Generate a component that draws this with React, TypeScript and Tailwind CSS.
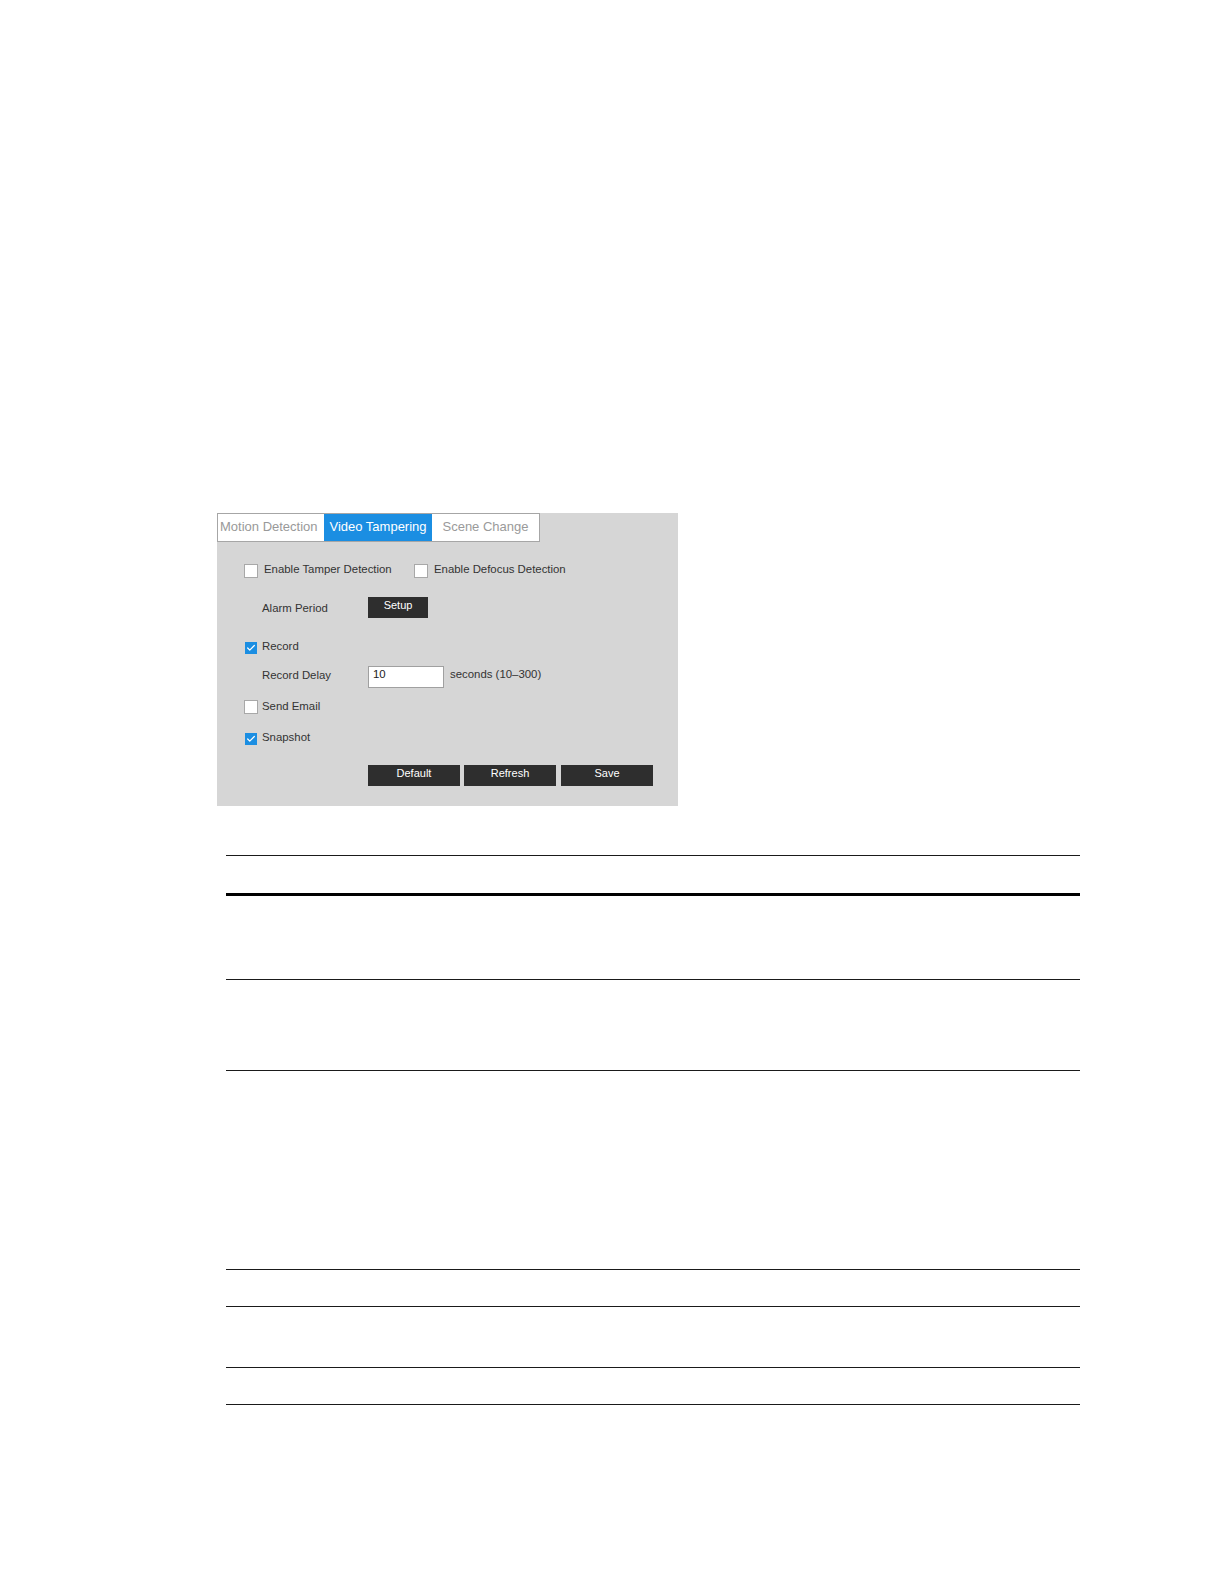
import { Check } from "lucide-react";

const FONT = { fontFamily: '"Liberation Sans", Arial, sans-serif' };

function Box({ checked }: { checked?: boolean }) {
  if (checked) {
    return (
      <span className="flex h-[12px] w-[12px] shrink-0 items-center justify-center bg-[#1b8ee2]">
        <Check className="size-[10px] text-white" strokeWidth={3} />
      </span>
    );
  }
  return <span className="block h-[14px] w-[14px] shrink-0 border border-[#a8a8a8] bg-white" />;
}

function DarkButton({ label, className }: { label: string; className: string }) {
  return (
    <button
      className={`flex h-[21px] items-start justify-center bg-[#2e2e2e] pt-[2px] text-[11px] leading-[13px] text-white ${className}`}
    >
      {label}
    </button>
  );
}

function TamperPanel() {
  return (
    <div className="ml-[217px] flex h-[293px] w-[461px] flex-col bg-[#d6d6d6] text-[11.4px] text-[#333]" style={FONT}>
      {/* Tabs */}
      <div className="flex h-[29px] w-[323px] border border-[#a6a6a6] bg-white text-[13px]">
        <div className="flex w-[106px] items-center overflow-hidden whitespace-nowrap pb-[1px] pl-[2px] text-[#999]">
          Motion Detection
        </div>
        <div className="flex w-[108px] items-center justify-center whitespace-nowrap bg-[#1b8ee2] pb-[1px] text-white">
          Video Tampering
        </div>
        <div className="flex flex-1 items-center justify-center whitespace-nowrap pb-[1px] text-[#9a9a9a]">
          Scene Change
        </div>
      </div>

      <div className="flex flex-col pl-[27px]">
        {/* Enable options */}
        <div className="mt-[22px] flex h-[14px] items-center">
          <Box />
          <span className="ml-[6px] w-[150px] pb-[3px]">Enable Tamper Detection</span>
          <Box />
          <span className="ml-[6px] pb-[3px]">Enable Defocus Detection</span>
        </div>

        {/* Alarm period */}
        <div className="mt-[19px] flex h-[21px] items-center">
          <span className="ml-[18px] w-[106px] pt-[2px]">Alarm Period</span>
          <DarkButton label="Setup" className="w-[60px]" />
        </div>

        {/* Record */}
        <div className="mt-[23px] flex h-[14px] items-center pl-[1px]">
          <Box checked />
          <span className="ml-[5px] pb-[3px]">Record</span>
        </div>

        <div className="mt-[11px] flex h-[22px] items-center">
          <span className="ml-[18px] w-[106px] pb-[2px]">Record Delay</span>
          <div className="flex h-[22px] w-[76px] items-start border border-[#a0a0a0] bg-white pl-[4px] pt-[1px] leading-[13px] text-[#222]">
            10
          </div>
          <span className="ml-[6px] pb-[4px]">seconds (10–300)</span>
        </div>

        {/* Send Email */}
        <div className="mt-[12px] flex h-[14px] items-center">
          <Box />
          <span className="ml-[4px] pb-[1px]">Send Email</span>
        </div>

        {/* Snapshot */}
        <div className="mt-[18px] flex h-[14px] items-center pl-[1px]">
          <Box checked />
          <span className="ml-[5px] pb-[3px]">Snapshot</span>
        </div>

        {/* Actions */}
        <div className="ml-[124px] mt-[19px] flex gap-[4px]">
          <DarkButton label="Default" className="w-[92px]" />
          <DarkButton label="Refresh" className="w-[92px]" />
          <DarkButton label="Save" className="ml-[1px] w-[92px]" />
        </div>
      </div>
    </div>
  );
}

export default function App() {
  return (
    <div className="min-h-[1584px] w-[1224px] bg-white">
      <div className="h-[513px]" />
      <TamperPanel />

      {/* Ruled table area */}
      <div className="ml-[226px] mt-[49px] w-[854px]">
        <div className="h-[38px] border-t border-[#1a1a1a]" />
        <div className="h-[86px] border-t-[3px] border-black" />
        <div className="h-[91px] border-t border-[#1a1a1a]" />
        <div className="h-[199px] border-t border-[#1a1a1a]" />
        <div className="h-[37px] border-t border-[#1a1a1a]" />
        <div className="h-[61px] border-t border-[#1a1a1a]" />
        <div className="h-[37px] border-t border-[#1a1a1a]" />
        <div className="border-t border-[#1a1a1a]" />
      </div>
    </div>
  );
}
